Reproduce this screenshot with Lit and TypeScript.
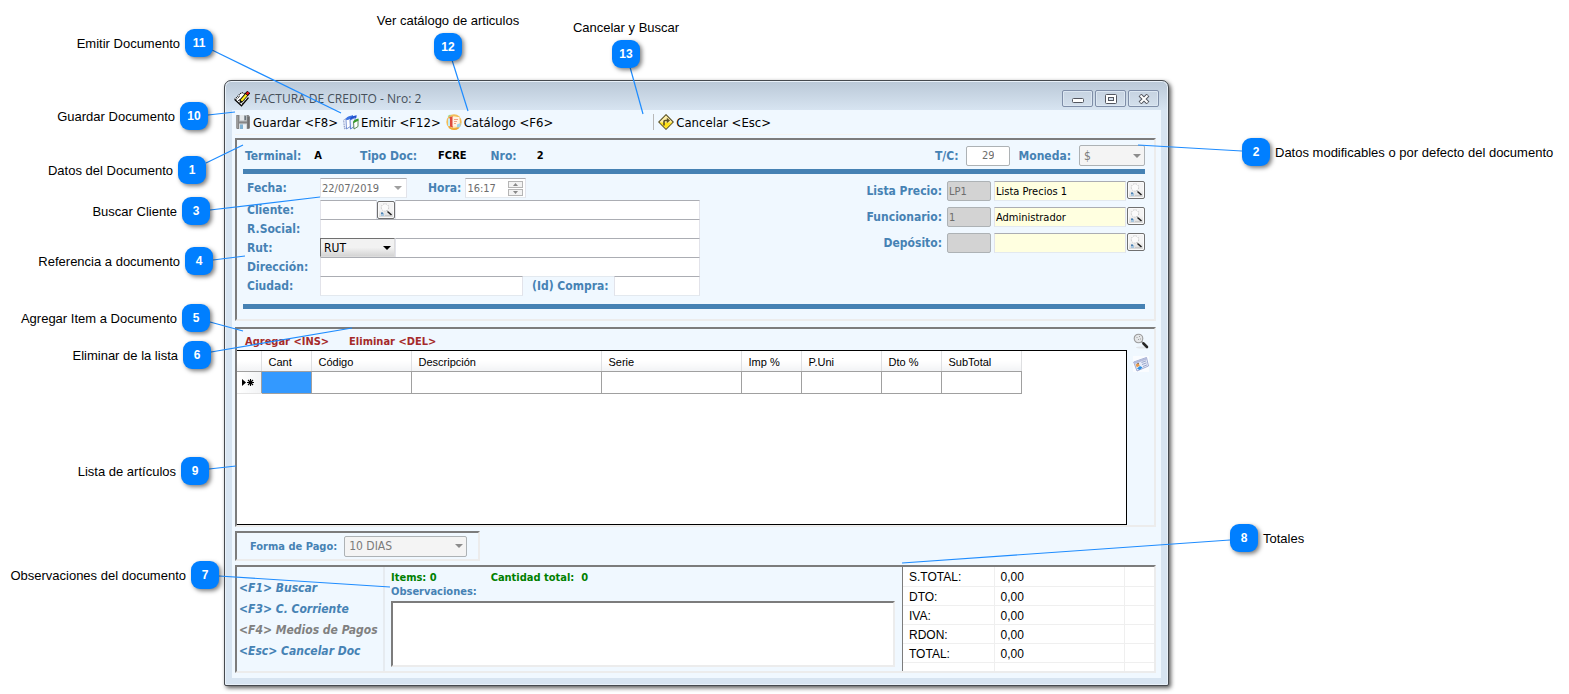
import { LitElement, html, svg, css, nothing } from "lit";
import { customElement } from "lit/decorators.js";
import { styleMap } from "lit/directives/style-map.js";

interface Callout {
  n: number;
  text: string;
  side: "left" | "right" | "top";
  x: number;
  y: number;
  to: [number, number];
  from: [number, number];
}

/* Callouts of the left group are measured from the left edge of the canvas. */
const LEFT_CALLOUTS: Callout[] = [
  { n: 11, text: "Emitir Documento", side: "left", x: 185, y: 29, from: [212, 50], to: [341, 113] },
  { n: 12, text: "Ver catálogo de articulos", side: "top", x: 434, y: 33, from: [452, 60], to: [468, 111] },
  { n: 13, text: "Cancelar y Buscar", side: "top", x: 612, y: 40, from: [630, 67], to: [643, 114] },
  { n: 10, text: "Guardar Documento", side: "left", x: 180, y: 102, from: [208, 115], to: [235, 112] },
  { n: 1, text: "Datos del Documento", side: "left", x: 178, y: 156, from: [206, 163], to: [243, 145] },
  { n: 3, text: "Buscar Cliente", side: "left", x: 182, y: 197, from: [210, 210], to: [320, 197] },
  { n: 4, text: "Referencia a documento", side: "left", x: 185, y: 247, from: [213, 260], to: [245, 256] },
  { n: 5, text: "Agregar Item a Documento", side: "left", x: 182, y: 304, from: [210, 322], to: [243, 331] },
  { n: 6, text: "Eliminar de la lista", side: "left", x: 183, y: 341, from: [211, 352], to: [352, 328] },
  { n: 9, text: "Lista de artículos", side: "left", x: 181, y: 457, from: [209, 469], to: [236, 466] },
  { n: 7, text: "Observaciones del documento", side: "left", x: 191, y: 561, from: [219, 576], to: [390, 587] },
];

/* Callouts of the right group are measured from the right edge of the window. */
const RIGHT_CALLOUTS: Callout[] = [
  { n: 2, text: "Datos modificables o por defecto del documento", side: "right", x: 73, y: 138, from: [73, 151], to: [-31, 145] },
  { n: 8, text: "Totales", side: "right", x: 61, y: 524, from: [61, 540], to: [-267, 563] },
];

const COLUMNS: [string, number][] = [
  ["Cant", 50], ["Código", 100], ["Descripción", 190], ["Serie", 140],
  ["Imp %", 60], ["P.Uni", 80], ["Dto %", 60], ["SubTotal", 80],
];

const TOTALS = [["S.TOTAL:", "0,00"], ["DTO:", "0,00"], ["IVA:", "0,00"], ["RDON:", "0,00"], ["TOTAL:", "0,00"]];

const icon = (body: unknown) =>
  html`<svg class="icon" viewBox="0 0 16 16" width="16" height="16" aria-hidden="true">${body}</svg>`;

const iconDoc = icon(svg`
  <path d="M.7 8.500 7.500 1.500 15 6 8 15z" fill="#fff"/>
  <path d="M.7 8.500 7.500 1.500 12 3" fill="none" stroke="#000" stroke-width="1.200" stroke-dasharray="1 1"/>
  <path d="M.7 8.500 7.500 14.800 14.500 6.500" fill="none" stroke="#000" stroke-width="1.200"/>
  <path d="M2.500 8.500 6 5M4 10l2-2M6 12.500 9 9.500M8 13l4-4.500" stroke="#222" stroke-width=".9" stroke-dasharray="1.300 .7"/>
  <path d="M6.500 10.500 13 3" stroke="#000" stroke-width="3.800"/>
  <path d="M7.300 9.800 12.500 3.700" stroke="#ffee20" stroke-width="2.200"/>
  <path d="M12.500 3.600 14.700 1" stroke="#000" stroke-width="3.800"/>
  <path d="M12.700 3.300 14.500 1.200" stroke="#e81212" stroke-width="2.400"/>
  <path d="M5.300 12.200l.7-2.700 2 1.700z" fill="#000"/>`);

const iconSave = icon(svg`
  <path d="M1.500 1h12l1.500 1.500V14l-1 1H2l-1-1V1.500z" fill="#858585"/>
  <path d="M1 2h2v12H1z" fill="#9d9d9d"/>
  <path d="M4 1h8v6.500H4z" fill="#b4b9bc"/><path d="M5 1h4v5.500H5z" fill="#e6e9eb"/><path d="M9.500 2H11v4H9.500z" fill="#6b757c"/>
  <path d="M4 9.500h8V15H4z" fill="#d3d9dd"/>
  <path d="M5 10.500h3V15H5z" fill="#7db0d2"/><path d="M8 10.500h3V15H8z" fill="#eef3f6"/>
  <path d="M12.500 3H14v11h-1.500z" fill="#6e6e6e"/>`);

const iconEmit = icon(svg`
  <path d="M.7 6 5 3.500v9L1.500 15z" fill="#f4f8ff" stroke="#4b5f9e" stroke-width=".8" stroke-dasharray="1 .7"/>
  <path d="M3 5.500 8 3v9l-4.500 3z" fill="#fff" stroke="#5a7ac8" stroke-width=".8"/>
  <path d="M2.500 5.500C4.500 1.500 7 2.500 10 1v2L5 6z" fill="#3b73e4"/>
  <path d="M6.500 5.500C8.500 1.500 11 2.500 13.500 1v2.500L8.500 6.500z" fill="#1f50d0"/>
  <path d="M7 6l5-2.500V12l-4.500 3z" fill="#edf3ff" stroke="#3a62c4" stroke-width=".8"/>
  <path d="M10.500 8 15 5.500v7l-4 2.500z" fill="#fff" stroke="#4a7f44" stroke-width=".9"/>
  <path d="M10 8c1-2.500 3-2.500 5.500-3.500v2L11 9z" fill="#359a28"/>`);

const iconCatalog = icon(svg`
  <circle cx="8" cy="8" r="7.700" fill="#f3bd58"/>
  <circle cx="8" cy="8" r="6" fill="#fbe2a6"/>
  <path d="M3.500 3 7 2.500v11L3.500 12.500z" fill="#dd4a3c"/><path d="M2 4.500h2v7.500H2z" fill="#c4ecf5"/>
  <path d="M6.500 3h7v9.500h-7z" fill="#fff1e2"/>
  <path d="M8 5.500h4M8 7.500h3M8 9.500h2" stroke="#f1a184" stroke-width="1"/>
  <path d="M11 10.500 14.500 9v3.500L11 14z" fill="#9fd4ea"/>
  <path d="M3 13.500c3 2 7 2 9.500.3" stroke="#eda62e" stroke-width="1.400" fill="none"/>
  <path d="M2 2.500 4.500 1" stroke="#9ed48a" stroke-width="1.200"/>`);

const iconCancel = icon(svg`
  <path d="M8 .7 15.300 8 8 15.300.7 8z" fill="#fff0a8" stroke="#5b5226" stroke-width="1.100"/>
  <path d="M1.800 8.500h12.400L8 14.400z" fill="#ffe21a"/>
  <path d="M6 11.500V7.500q0-1 1-1h2.500" fill="none" stroke="#5a4f28" stroke-width="1.600"/>
  <path d="M8.800 3.800 12 6.500 8.800 9.200z" fill="#5a4f28"/>`);

const iconFind = icon(svg`
  <circle cx="7" cy="5.500" r="3.700" fill="#fbfbfb" stroke="#c4c4c4" stroke-width="1" stroke-dasharray="1.500 1"/>
  <path d="M9.500 9.500 13.500 13" stroke="#1f1f1f" stroke-width="1.600"/>
  <path d="M9 8.500l1.500 1.500" stroke="#8a8a8a"/>
  <path d="M3 11h3v3H3z" fill="#a5c4de"/><path d="M3 10.500h2v1.200H3z" fill="#2f6da5"/>
  <path d="M7 13.500h5" stroke="#c9c9c9"/>`);

const iconLens = icon(svg`
  <ellipse cx="9" cy="14.500" rx="6" ry="1" fill="#e0e4e8"/>
  <circle cx="5.500" cy="5.500" r="4.300" fill="#e4e6e8" stroke="#9b9b9b" stroke-width="1.100"/>
  <path d="M3.500 4.500h1M6 3.500h1M5 6.500h1M7 6h1" stroke="#a0a0a0"/>
  <path d="M8.500 8.500l2 2" stroke="#8a8a8a" stroke-width="1.500"/>
  <path d="M10.500 10.500 14 14" stroke="#262626" stroke-width="2.600" stroke-linecap="round"/>`);

const iconCard = icon(svg`
  <path d="M0 0h16v16H0z" fill="#fafcff"/>
  <path d="M.7 6 13.500 1.500 15.500 10 4 15z" fill="#e6ebf8" stroke="#9aa4cc" stroke-width=".9"/>
  <path d="M1 6 13.300 1.700l.5 1.800L1.600 8z" fill="#b3bbdc"/>
  <path d="M2.500 8.500l3-1.200 1.300 2.500-3 1.500z" fill="#e79a4b"/><path d="M3.500 7.500l2-.8.5 1z" fill="#5b3a1e"/>
  <path d="M4 12.500l3-2.500 2.500 1.500-3 2.500z" fill="#2f8fe0"/>
  <path d="M8.500 6.500l4.500-1.600M9 8.500l4.500-1.600M10 10.500l4-1.600" stroke="#8693be" stroke-width=".8"/>`);

@customElement("app-root")
export class AppRoot extends LitElement {
  static styles = css`
    :host {
      display: block;
      min-height: 100vh;
      background: #fff;
      color: #000;
      font-family: Tahoma, "DejaVu Sans Condensed", "DejaVu Sans", sans-serif;
      font-size: 11px;
    }
    * { box-sizing: border-box; }
    .canvas { position: relative; padding: 80px 400px 8px 224px; overflow: hidden; }
    .stage { position: relative; min-width: 945px; }

    /* window frame */
    .window {
      border: 1px solid #45494e;
      border-radius: 7px 7px 2px 2px;
      background: #d7e4f1;
      padding: 0 7px 7px;
      box-shadow: 2px 2px 4px rgba(0, 0, 0, 0.65), inset 0 0 0 1px #e9f1f9;
      background-image: linear-gradient(#bac8d7, #d7e4f1 29px);
    }
    .titlebar { display: flex; align-items: center; height: 29px; padding: 6px 2px 0; gap: 4px; }
    .title {
      flex: 1; margin: 0; font: 400 12px "Segoe UI", "Open Sans", sans-serif; color: #46505a;
    }
    .controls { display: flex; gap: 2px; }
    .control {
      width: 31px; height: 17px; padding: 0; display: grid; place-items: center;
      border: 1px solid #7f8ea8; border-radius: 2px;
      background: linear-gradient(#c6d3e1, #d3dfec); box-shadow: inset 0 0 0 1px #dce7f2;
    }
    .icon { display: block; flex: none; }
    .client { background: #f0f8ff; padding: 0 5px 5px 3px; }

    .toolbar { display: flex; align-items: center; height: 25px; border-bottom: 1px solid #f4f4f2; margin-bottom: 3px; gap: 5px; }
    .tool {
      display: flex; align-items: center; gap: 2px; border: 0; background: none; padding: 0;
      font: 13px Tahoma, "DejaVu Sans Condensed", "DejaVu Sans", sans-serif; color: #000; white-space: nowrap;
    }
    .tool.cancel { border-left: 1px solid #b8b8b8; padding-left: 4px; margin-left: 95px; }

    .panel {
      border: 2px solid;
      border-color: #7c7c7c #ececec #ececec #7c7c7c;
      margin-bottom: 4px;
    }
    .label { font-weight: 700; color: #4682b4; white-space: nowrap; }
    .big { font-size: 12px; }
    .value { font-weight: 700; }

    /* document header */
    .header { padding: 0 9px 10px 6px; margin-bottom: 6px; }
    .summary { display: flex; align-items: center; height: 29px; padding: 2px 0 0 2px; }
    .summary .value { margin: 0 38px 0 13px; }
    .summary .code { margin: 0 24px 0 21px; }
    .summary .number { margin: 0 0 0 20px; flex: 1; }
    .rule { height: 5px; margin: 0; border: 0; background: #4682b4; }
    .forms { display: flex; justify-content: space-between; padding: 4px 0 9px 4px; }

    input, select, textarea { font: inherit; color: inherit; margin: 0; border-radius: 0; min-width: 0; }
    .field {
      border: 1px solid; border-color: #abadb3 #e2e3ea #e3e9ef #e2e3ea; background: #fff;
      height: 20px; padding: 0 3px; width: 100%;
    }
    .stacked { display: grid; grid-template-columns: 73px 380px; align-content: start; }
    .line { display: flex; height: 19px; align-items: flex-start; }
    .line.first { height: 22px; }
    .stacked .label { line-height: 21px; }
    .row-label { height: 19px; }
    .row-label.first { height: 22px; }
    .date, .time {
      display: flex; align-items: center; height: 20px; border: 1px solid; border-color: #abadb3 #e2e3ea #e3e9ef #e2e3ea;
      background: #fff; color: #6d6d6d;
    }
    .date { width: 87px; margin-right: 21px; }
    .time { width: 61px; margin-left: 4px; }
    .bare { border: 0; background: none; width: 100%; padding: 0 1px; outline: 0; flex: 1; }
    .date svg { margin-right: 4px; flex: none; }
    .spin { display: grid; gap: 1px; margin-right: 2px; }
    .spin svg { display: block; background: #f3f3f3; border: 1px solid #b5b5b5; }
    .client-code { width: 57px; flex: none; }
    .find {
      width: 18px; height: 18px; padding: 0; flex: none; border: 1px solid #707070; border-radius: 2px;
      background: linear-gradient(#f4f4f4 50%, #d4d4d4); display: grid; place-items: center; overflow: hidden;
      box-shadow: inset 0 0 0 1px #fafafa;
    }
    .line .find { margin-top: 1px; }
    .city { width: 203px; flex: none; margin-right: 9px; }
    .buy { width: 86px; flex: none; margin-left: auto; }

    .pick { display: grid; align-items: center; justify-items: end; flex: none; }
    .pick > * { grid-area: 1 / 1; }
    .pick svg { margin-right: 4px; pointer-events: none; z-index: 1; }
    .pick select { appearance: none; width: 100%; height: 21px; padding: 0 4px; opacity: 1; font-size: 12px; }
    .pick select:disabled { background: #f4f4f4; border: 1px solid #adb2b5; border-radius: 2px; color: #7a7a7a; }
    .kind { width: 75px; }
    .kind select { height: 19px; border: 1px solid; border-color: #707070 #dcdcdc #dcdcdc #707070; padding: 0 3px; background: linear-gradient(#f2f2f2 50%, #d4d4d4); }
    .currency { width: 66px; margin-left: 8px; }
    .rate { width: 44px; border-color: #adb2b5; border-radius: 2px; text-align: right; padding-right: 15px; margin: 0 8px; color: #6d6d6d; }

    .lookups { display: grid; grid-template-columns: auto 46px 134px 18px; gap: 6px 0; align-content: start; padding-top: 3px; align-items: center; justify-items: end; }
    .lookups .label { margin-right: 5px; }
    .lookups .find { margin-bottom: 2px; }
    .lookups .key { justify-self: start; width: 44px; background: #d3d3d3; color: #6d6d6d; padding: 0 1px; border: 1px solid #adb2b5; border-radius: 2px; }
    .lookups .text { width: 132px; background: #ffffe0; margin-right: 1px; padding: 0 1px; }

    /* item list */
    .items { display: grid; grid-template-columns: minmax(0, 1fr) 27px; min-height: 200px; }
    .actions { display: flex; gap: 20px; height: 21px; align-items: center; padding: 4px 0 0 8px; }
    .action { border: 0; background: none; padding: 0; font: inherit; font-weight: 700; color: #a52a2a; }
    .sheet { background: #fff; border: 1px solid #000; border-left: 0; height: 175px; }
    .grid { border-collapse: collapse; table-layout: fixed; width: 784px; font-family: "Liberation Sans", Arial, sans-serif; }
    .grid th { height: 20px; padding: 2px 0 0 7px; text-align: left; font-weight: 400; background: linear-gradient(#fff 50%, #f2f3f5); border-right: 1px solid #dedfe1; border-bottom: 1px solid #a0a0a0; }
    .grid td { height: 22px; padding: 0; border: 1px solid #a0a0a0; }
    .grid .mark { border-left: 0; background: linear-gradient(90deg, #fff, #f2f3f5); border-bottom-color: #e4e4e4; }
    .grid .mark svg { display: block; margin-left: 4px; }
    .grid .active { background: #3399ff; }
    .sidebar { display: flex; flex-direction: column; align-items: center; gap: 7px; padding-top: 4px; }
    .side-tool { border: 0; background: none; padding: 0; }

    .payment { display: flex; align-items: center; width: 245px; height: 30px; padding-left: 13px; gap: 7px; }
    .payment .pick { width: 123px; }

    /* footer */
    .footer { display: flex; min-height: 107px; margin-bottom: 0; }
    .shortcuts { width: 148px; flex: none; padding: 11px 0 0 2px; border-right: 2px solid #e6ebf0; }
    .shortcuts a { display: block; line-height: 21px; font-size: 12px; font-weight: 700; font-style: italic; color: #4682b4; text-decoration: none; white-space: nowrap; }
    .shortcuts .off { color: #808080; }
    .notes { flex: 1; display: flex; flex-direction: column; padding: 4px 7px 4px 6px; }
    .counts { display: flex; gap: 54px; color: #008000; font-weight: 700; line-height: 14px; }
    .notes .label { line-height: 14px; }
    .notes textarea { display: block; width: 100%; height: 66px; margin-top: 2px; resize: none; background: #fff; border: 2px solid; border-color: #7c7c7c #ececec #ececec #7c7c7c; outline: 0; }
    .totals { width: 252px; flex: none; border-left: 1px solid #7c7c7c; background: #fff; }
    .totals table { width: 100%; border-collapse: collapse; table-layout: fixed; font: 12px "Liberation Sans", Arial, sans-serif; }
    .totals th, .totals td { height: 19px; padding: 2px 0 0 6px; font-weight: 400; text-align: left; border-bottom: 1px solid #efefef; border-right: 1px solid #efefef; line-height: 16px; }
    .totals tr > :last-child { border-right: 0; }
    .totals .blank td { height: 9px; padding: 0; border-bottom: 0; }

    /* callouts */
    .layer { position: absolute; top: 0; left: 0; width: 0; height: 0; font: 13px "Liberation Sans", Arial, sans-serif; }
    .layer.end { left: calc(max(100% - 400px, 1169px)); }
    .wires { position: absolute; overflow: visible; pointer-events: none; }
    .callout { position: absolute; width: 28px; height: 28px; display: grid; place-items: center; }
    .badge { width: 28px; height: 28px; border-radius: 9px; background: #007fff; color: #fff; font-size: 12px; font-weight: 700; display: grid; place-items: center; box-shadow: 2px 2px 4px rgba(0, 0, 0, 0.5); }
    .caption { position: absolute; white-space: nowrap; line-height: 16px; }
    .caption.left { right: 33px; top: 7px; }
    .caption.right { left: 33px; top: 7px; }
    .caption.top { bottom: 32px; }
  `;

  private arrow(color: string) {
    return html`<svg width="8" height="4" viewBox="0 0 8 4" aria-hidden="true"><path d="M0 0h8L4 4z" fill=${color} /></svg>`;
  }

  private find(label: string) {
    return html`<button class="find" aria-label=${label}>${iconFind}</button>`;
  }

  private lookup(id: string, label: string, key: string, text: string) {
    return html`
      <label class="label big" for=${id}>${label}</label>
      <input class="field key" id=${id} .value=${key} disabled />
      <input class="field text" aria-label="${label} nombre" .value=${text} />
      ${this.find(`Buscar ${label}`)}`;
  }

  private callouts(list: Callout[], end = false) {
    return html`<div class="layer ${end ? "end" : ""}">
      <svg class="wires" width="1" height="1" aria-hidden="true">
        ${list.map((c) => svg`<line x1=${c.from[0]} y1=${c.from[1]} x2=${c.to[0]} y2=${c.to[1]} stroke="#1e8cff" stroke-width="1.200" />`)}
      </svg>
      ${list.map((c) => html`
        <div class="callout" style=${styleMap({ left: `${c.x}px`, top: `${c.y}px` })}>
          <span class="badge">${c.n}</span>
          <span class="caption ${c.side}">${c.text}</span>
        </div>`)}
    </div>`;
  }

  private titlebar() {
    return html`<header class="titlebar">
      ${iconDoc}
      <h1 class="title">FACTURA DE CREDITO - Nro: 2</h1>
      <div class="controls">
        <button class="control" aria-label="Minimizar"><svg width="12" height="10" viewBox="0 0 12 10"><rect x=".5" y="4.500" width="11" height="4" rx="1" fill="#fff" stroke="#53565f" /></svg></button>
        <button class="control" aria-label="Maximizar"><svg width="12" height="10" viewBox="0 0 12 10"><rect x=".5" y=".5" width="11" height="9" rx="1" fill="#fff" stroke="#53565f" /><rect x="3.500" y="3.500" width="5" height="3" fill="#d5e0ec" stroke="#53565f" /></svg></button>
        <button class="control" aria-label="Cerrar"><svg width="12" height="10" viewBox="0 0 12 10"><path d="M2 1l8 8M10 1 2 9" stroke="#53565f" stroke-width="4" /><path d="M2.500 1.500l7 7M9.500 1.500l-7 7" stroke="#fff" stroke-width="2" /></svg></button>
      </div>
    </header>`;
  }

  private documentPanel() {
    return html`<section class="panel header">
      <div class="summary">
        <span class="label big">Terminal:</span><span class="value">A</span>
        <span class="label big">Tipo Doc:</span><span class="value code">FCRE</span>
        <span class="label big">Nro:</span><span class="value number">2</span>
        <label class="label big" for="rate">T/C:</label>
        <input class="field rate" id="rate" value="29" />
        <label class="label big" for="currency">Moneda:</label>
        <span class="pick currency"><select id="currency" disabled><option>$</option></select>${this.arrow("#8c8c8c")}</span>
      </div>
      <hr class="rule" />
      <div class="forms">
        <div class="stacked">
          <label class="label big row-label first" for="date">Fecha:</label>
          <div class="line first">
            <span class="date"><input class="bare" id="date" value="22/07/2019" disabled />${this.arrow("#a0a0a0")}</span>
            <label class="label big" for="time">Hora:</label>
            <span class="time"><input class="bare" id="time" value="16:17" disabled />
              <span class="spin">
                <svg width="15" height="7" viewBox="0 0 13 5"><path d="M4 4h5L6.500 1z" fill="#888" /></svg>
                <svg width="15" height="7" viewBox="0 0 13 5"><path d="M4 1h5L6.500 4z" fill="#888" /></svg>
              </span></span>
          </div>
          <label class="label big row-label" for="client">Cliente:</label>
          <div class="line"><input class="field client-code" id="client" />${this.find("Buscar cliente")}<input class="field" aria-label="Nombre del cliente" /></div>
          <label class="label big row-label" for="company">R.Social:</label>
          <div class="line"><input class="field" id="company" /></div>
          <label class="label big row-label" for="rut">Rut:</label>
          <div class="line">
            <span class="pick kind"><select aria-label="Tipo"><option>RUT</option></select>${this.arrow("#000")}</span>
            <input class="field" id="rut" />
          </div>
          <label class="label big row-label" for="address">Dirección:</label>
          <div class="line"><input class="field" id="address" /></div>
          <label class="label big row-label" for="city">Ciudad:</label>
          <div class="line">
            <input class="field city" id="city" />
            <label class="label big" for="buy">(Id) Compra:</label>
            <input class="field buy" id="buy" />
          </div>
        </div>
        <div class="lookups">
          ${this.lookup("prices", "Lista Precio:", "LP1", "Lista Precios 1")}
          ${this.lookup("staff", "Funcionario:", "1", "Administrador")}
          ${this.lookup("store", "Depósito:", "", "")}
        </div>
      </div>
      <hr class="rule" />
    </section>`;
  }

  private itemsPanel() {
    return html`<section class="panel items">
      <div>
        <div class="actions">
          <button class="action">Agregar &lt;INS&gt;</button>
          <button class="action">Eliminar &lt;DEL&gt;</button>
        </div>
        <div class="sheet">
          <table class="grid">
            <colgroup><col style=${styleMap({ width: "24px" })} />${COLUMNS.map(([, w]) => html`<col style=${styleMap({ width: `${w}px` })} />`)}</colgroup>
            <thead><tr><th></th>${COLUMNS.map(([name]) => html`<th>${name}</th>`)}</tr></thead>
            <tbody><tr>
              <td class="mark"><svg width="13" height="9" viewBox="0 0 13 9" aria-hidden="true"><path d="M1 1v7l4-3.500z" /><path d="M9.500 1v7M6 4.500h7M7 2l5 5M12 2 7 7" stroke="#000" stroke-width="1.100" /></svg></td>
              ${COLUMNS.map((_, i) => html`<td class=${i === 0 ? "active" : nothing}></td>`)}
            </tr></tbody>
          </table>
        </div>
      </div>
      <div class="sidebar">
        <button class="side-tool" aria-label="Buscar artículo">${iconLens}</button>
        <button class="side-tool" aria-label="Ficha">${iconCard}</button>
      </div>
    </section>`;
  }

  private footerPanel() {
    return html`<section class="panel footer">
      <nav class="shortcuts">
        <a href="#buscar">&lt;F1&gt; Buscar</a>
        <a href="#corriente">&lt;F3&gt; C. Corriente</a>
        <a class="off" href="#pagos">&lt;F4&gt; Medios de Pagos</a>
        <a href="#cancelar">&lt;Esc&gt; Cancelar Doc</a>
      </nav>
      <div class="notes">
        <div class="counts"><span>Items: 0</span><span>Cantidad total:&nbsp; 0</span></div>
        <label class="label" for="notes">Observaciones:</label>
        <textarea id="notes"></textarea>
      </div>
      <div class="totals">
        <table>
          <colgroup><col style=${styleMap({ width: "91px" })} /><col style=${styleMap({ width: "130px" })} /><col /></colgroup>
          ${TOTALS.map(([name, amount]) => html`<tr><th>${name}</th><td>${amount}</td><td></td></tr>`)}
          <tr class="blank"><td></td><td></td><td></td></tr>
        </table>
      </div>
    </section>`;
  }

  render() {
    return html`<div class="canvas">
      <main class="stage">
        <div class="window">
          ${this.titlebar()}
          <div class="client">
            <div class="toolbar">
              <button class="tool">${iconSave}Guardar &lt;F8&gt;</button>
              <button class="tool">${iconEmit}Emitir &lt;F12&gt;</button>
              <button class="tool">${iconCatalog}Catálogo &lt;F6&gt;</button>
              <button class="tool cancel">${iconCancel}Cancelar &lt;Esc&gt;</button>
            </div>
            ${this.documentPanel()}
            ${this.itemsPanel()}
            <section class="panel payment">
              <label class="label" for="payment">Forma de Pago:</label>
              <span class="pick"><select id="payment" disabled><option>10 DIAS</option></select>${this.arrow("#8c8c8c")}</span>
            </section>
            ${this.footerPanel()}
          </div>
        </div>
      </main>
      ${this.callouts(LEFT_CALLOUTS)}
      ${this.callouts(RIGHT_CALLOUTS, true)}
    </div>`;
  }
}
